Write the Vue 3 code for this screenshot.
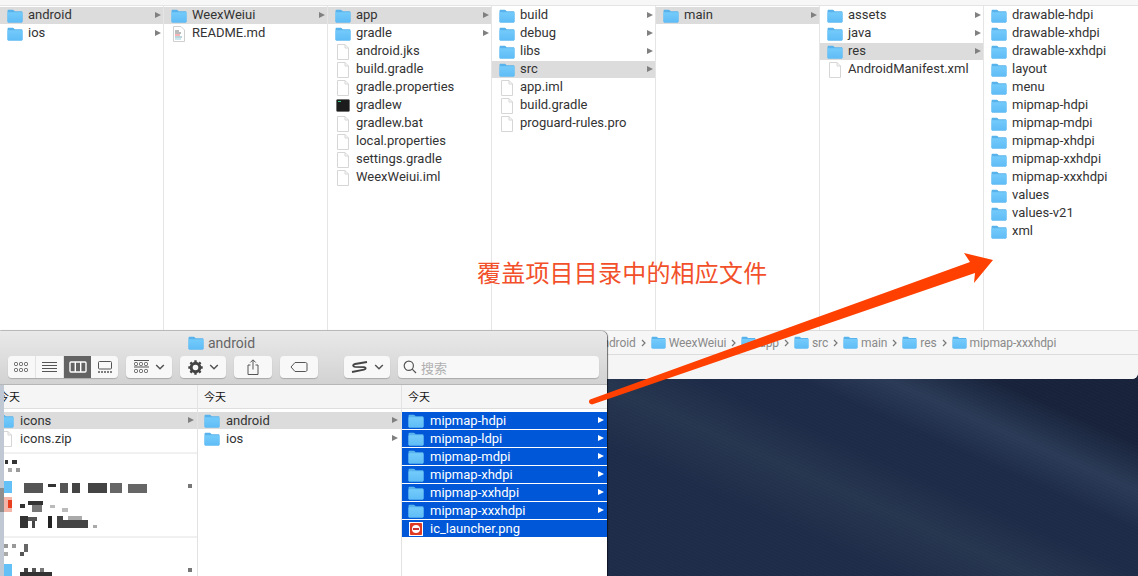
<script setup>
const F = 'folder', D = 'file'
const backCols = [
  [{ n: 'android', i: F, a: 1, s: 1 }, { n: 'ios', i: F, a: 1 }],
  [{ n: 'WeexWeiui', i: F, a: 1, s: 1 }, { n: 'README.md', i: 'doc' }],
  [{ n: 'app', i: F, a: 1, s: 1 }, { n: 'gradle', i: F, a: 1 }, { n: 'android.jks', i: D }, { n: 'build.gradle', i: D }, { n: 'gradle.properties', i: D }, { n: 'gradlew', i: 'term' }, { n: 'gradlew.bat', i: D }, { n: 'local.properties', i: D }, { n: 'settings.gradle', i: D }, { n: 'WeexWeiui.iml', i: D }],
  [{ n: 'build', i: F, a: 1 }, { n: 'debug', i: F, a: 1 }, { n: 'libs', i: F, a: 1 }, { n: 'src', i: F, a: 1, s: 1 }, { n: 'app.iml', i: D }, { n: 'build.gradle', i: D }, { n: 'proguard-rules.pro', i: D }],
  [{ n: 'main', i: F, a: 1, s: 1 }],
  [{ n: 'assets', i: F, a: 1 }, { n: 'java', i: F, a: 1 }, { n: 'res', i: F, a: 1, s: 1 }, { n: 'AndroidManifest.xml', i: D }],
  ['drawable-hdpi', 'drawable-xhdpi', 'drawable-xxhdpi', 'layout', 'menu', 'mipmap-hdpi', 'mipmap-mdpi', 'mipmap-xhdpi', 'mipmap-xxhdpi', 'mipmap-xxxhdpi', 'values', 'values-v21', 'xml'].map((n) => ({ n, i: F }))
]
const path = ['android', 'WeexWeiui', 'app', 'src', 'main', 'res', 'mipmap-xxxhdpi']
const frontCols = [
  { cls: 'fc1', rows: [{ n: 'icons', i: F, a: 1, s: 1 }, { n: 'icons.zip', i: D }] },
  { cls: 'fc2', rows: [{ n: 'android', i: F, a: 1, s: 1 }, { n: 'ios', i: F, a: 1 }] },
  { cls: 'fc3', rows: ['mipmap-hdpi', 'mipmap-ldpi', 'mipmap-mdpi', 'mipmap-xhdpi', 'mipmap-xxhdpi', 'mipmap-xxxhdpi'].map((n) => ({ n, i: F, a: 1, b: 1 })).concat({ n: 'ic_launcher.png', i: 'png', b: 1 }) }
]
// Pixelated (censored) text blocks, in page coordinates: x, y, w, h, colour
const mosaic = [
  [5, 460, 3, 4, '#333'], [12, 460, 5, 4, '#333'], [8, 468, 4, 4, '#aaa'], [16, 468, 4, 4, '#999'],
  [24, 483, 19, 10, '#555'], [48, 484, 8, 3, '#333'], [60, 483, 8, 10, '#555'], [72, 483, 8, 10, '#444'], [88, 483, 19, 10, '#444'], [110, 483, 12, 10, '#666'], [128, 484, 19, 9, '#666'], [188, 484, 4, 4, '#777'],
  [20, 504, 5, 4, '#333'], [28, 501, 15, 4, '#333'], [32, 505, 10, 7, '#777'], [50, 505, 5, 3, '#bbb'], [62, 508, 6, 4, '#bbb'],
  [20, 516, 8, 12, '#333'], [28, 517, 9, 4, '#555'], [32, 521, 3, 7, '#444'], [48, 516, 4, 12, '#222'], [57, 516, 6, 12, '#444'], [63, 520, 25, 8, '#444'], [68, 516, 14, 4, '#aaa'], [93, 525, 4, 3, '#aaa'],
  [4, 544, 4, 4, '#999'], [12, 544, 4, 4, '#999'], [24, 544, 4, 8, '#666'], [20, 552, 4, 4, '#555'], [4, 552, 4, 4, '#aaa'],
  [20, 572, 32, 4, '#333'], [24, 568, 4, 4, '#444'], [32, 568, 4, 4, '#555'], [40, 568, 4, 4, '#777'], [188, 568, 4, 4, '#777']
]
</script>

<template>
  <div class="desktop">
    <svg class="defs" aria-hidden="true">
      <defs>
        <linearGradient id="fg" x1="0" y1="0" x2="0" y2="1">
          <stop offset="0" stop-color="#74cbfb" />
          <stop offset="1" stop-color="#5fbcf6" />
        </linearGradient>
      </defs>
      <symbol id="folder" viewBox="0 0 16 14">
        <path d="M0.5 2.2C0.5 1.3 1 .8 1.9 .8H5.6C6.3 .8 6.6 1 7 1.5L7.6 2.2H14.2C15 2.2 15.5 2.7 15.5 3.5V12.2C15.5 13 15 13.5 14.2 13.5H1.8C1 13.5 .5 13 .5 12.2Z" fill="#58b3ec" />
        <path d="M0.5 4C0.5 3.5 .8 3.2 1.3 3.2H14.7C15.2 3.2 15.5 3.5 15.5 4V12.2C15.5 13 15 13.5 14.2 13.5H1.8C1 13.5 .5 13 .5 12.2Z" fill="url(#fg)" />
      </symbol>
      <symbol id="file" viewBox="0 0 14 16">
        <path d="M1.5 .5H9L12.5 4V15.5H1.5Z" fill="#fff" stroke="#d6d6d6" />
        <path d="M9 .5V4H12.5" fill="none" stroke="#d6d6d6" />
      </symbol>
      <symbol id="doc" viewBox="0 0 14 16">
        <path d="M1.5 .5H9L12.5 4V15.5H1.5Z" fill="#fff" stroke="#cfcfcf" />
        <path d="M3 5H7M3 7H9" stroke="#777" />
        <path d="M3 9H8" stroke="#e66" />
        <path d="M3 11H10" stroke="#7ab" />
        <path d="M3 13H9" stroke="#9cd" />
      </symbol>
      <symbol id="term" viewBox="0 0 14 14">
        <rect x=".5" y=".5" width="13" height="12" rx="1" fill="#1c1c1c" stroke="#555" stroke-width=".5" />
        <path d="M2 2.5H5" stroke="#3c8" />
      </symbol>
      <symbol id="png" viewBox="0 0 14 14">
        <rect width="14" height="14" fill="#fff" />
        <rect x="1" y="1" width="12" height="12" rx="1" fill="#e03a22" />
        <circle cx="7" cy="7" r="4" fill="#fff" />
        <rect x="4" y="6" width="6" height="2" fill="#c33" />
      </symbol>
    </svg>

    <section class="back">
      <div class="strip"></div>
      <div class="columns">
        <div v-for="(col, c) in backCols" :key="c" class="col">
          <div v-for="r in col" :key="r.n" class="row" :class="{ sel: r.s }">
            <svg class="ico" :class="r.i"><use :href="'#' + r.i" /></svg>
            <span class="name">{{ r.n }}</span>
            <i v-if="r.a" class="tri"></i>
          </div>
        </div>
      </div>
      <div class="path">
        <template v-for="(p, k) in path" :key="p">
          <svg class="pico"><use href="#folder" /></svg>
          <span class="pname">{{ p }}</span>
          <svg v-if="k < path.length - 1" class="chev" viewBox="0 0 5 8"><path d="M1 1L4 4L1 7" fill="none" stroke="#777" stroke-width="1.2" /></svg>
        </template>
      </div>
      <div class="status"></div>
    </section>

    <section class="front">
      <header class="chrome">
        <div class="title">
          <svg class="tico"><use href="#folder" /></svg>
          <span>android</span>
        </div>
        <div class="tools">
          <div class="seg">
            <button class="btn">
              <svg width="15" height="12" viewBox="0 0 15 12" fill="none" stroke="#555" stroke-width="1">
                <rect x=".5" y="1.5" width="3" height="3" rx="1" /><rect x="5.5" y="1.5" width="3" height="3" rx="1" /><rect x="10.5" y="1.5" width="3" height="3" rx="1" />
                <rect x=".5" y="7.5" width="3" height="3" rx="1" /><rect x="5.5" y="7.5" width="3" height="3" rx="1" /><rect x="10.5" y="7.5" width="3" height="3" rx="1" />
              </svg>
            </button>
            <button class="btn">
              <svg width="15" height="12" viewBox="0 0 15 12" stroke="#555" stroke-width="1"><path d="M0 1.500H15M0 4.500H15M0 7.500H15M0 10.500H15" /></svg>
            </button>
            <button class="btn on">
              <svg width="18" height="12" viewBox="0 0 18 12" fill="none" stroke="#fff" stroke-width="1.4"><rect x="1" y="1" width="16" height="10" rx="1" /><path d="M6.300 1V11M11.700 1V11" /></svg>
            </button>
            <button class="btn">
              <svg width="16" height="13" viewBox="0 0 16 13" fill="none" stroke="#555" stroke-width="1"><rect x="1.500" y=".5" width="13" height="7.500" rx="1" /><path d="M1 11H15" stroke-dasharray="2 1" stroke-width="1.600" /></svg>
            </button>
          </div>
          <button class="btn w46 solo">
            <svg width="15" height="14" viewBox="0 0 15 14" fill="none" stroke="#555" stroke-width="1">
              <path d="M0 .5H15" /><rect x=".5" y="2.500" width="3" height="3" rx="1" /><rect x="5.500" y="2.500" width="3" height="3" rx="1" /><rect x="10.500" y="2.500" width="3" height="3" rx="1" />
              <path d="M0 7H15" /><rect x=".5" y="9.500" width="3" height="3" rx="1" /><rect x="5.500" y="9.500" width="3" height="3" rx="1" /><rect x="10.500" y="9.500" width="3" height="3" rx="1" />
            </svg>
            <svg class="dn" width="10" height="6" viewBox="0 0 10 6"><path d="M1.200 1L5 4.800L8.800 1" fill="none" stroke="#555" stroke-width="1.500" /></svg>
          </button>
          <button class="btn w46 solo">
            <svg width="15" height="15" viewBox="0 0 15 15">
              <circle cx="7.500" cy="7.500" r="4.300" fill="none" stroke="#444" stroke-width="3" />
              <path d="M7.500 .3V3M7.500 12V14.700M.3 7.500H3M12 7.500H14.700M2.400 2.400L4.300 4.300M10.700 10.700L12.600 12.600M12.600 2.400L10.700 4.300M4.300 10.700L2.400 12.600" stroke="#444" stroke-width="2.400" />
            </svg>
            <svg class="dn" width="10" height="6" viewBox="0 0 10 6"><path d="M1.200 1L5 4.800L8.800 1" fill="none" stroke="#555" stroke-width="1.500" /></svg>
          </button>
          <button class="btn w38 solo">
            <svg width="12" height="16" viewBox="0 0 12 16" fill="none" stroke="#555" stroke-width="1"><path d="M3.500 6H1V15.500H11V6H8.500M6 10.500V1M3.300 3.500L6 .8L8.700 3.500" /></svg>
          </button>
          <button class="btn w38 solo">
            <svg width="18" height="10" viewBox="0 0 18 10" fill="none" stroke="#555" stroke-width="1"><path d="M5 .5H15.500C16.400 .5 17 1.100 17 2V8C17 8.900 16.400 9.500 15.500 9.500H5L1 5Z" /></svg>
          </button>
          <button class="btn w46 solo gapL">
            <svg width="17" height="12" viewBox="0 0 17 12" fill="none" stroke="#444" stroke-width="1.800"><path d="M16 1L4 3C1.500 3.600 1.500 5.600 4 5.800L13 6.200C15.500 6.600 15 8.300 13 8.700L1 11" /></svg>
            <svg class="dn" width="10" height="6" viewBox="0 0 10 6"><path d="M1.200 1L5 4.800L8.800 1" fill="none" stroke="#555" stroke-width="1.500" /></svg>
          </button>
          <div class="search">
            <svg width="14" height="14" viewBox="0 0 14 14" fill="none" stroke="#555" stroke-width="1.200"><circle cx="5.800" cy="5.800" r="4.600" /><path d="M9.200 9.200L13 13" /></svg>
            <span>搜索</span>
          </div>
        </div>
      </header>
      <div class="fbody">
        <div class="edge"></div>
        <div class="edge-dark"></div>
        <div v-for="(col, c) in frontCols" :key="c" class="fcol" :class="col.cls">
          <div class="fhead">今天</div>
          <div class="frows">
            <div v-for="r in col.rows" :key="r.n" class="row" :class="{ sel: r.s, blue: r.b }">
              <svg class="ico" :class="r.i"><use :href="'#' + r.i" /></svg>
              <span class="name">{{ r.n }}</span>
              <i v-if="r.a" class="tri"></i>
            </div>
            <svg v-if="c === 0" class="mosaic" width="205" height="130" viewBox="-8 447 205 130">
              <path d="M4 453H197M4 537H197" stroke="#e2e2e2" />
              <rect x="4" y="481" width="8" height="12" fill="#64c1f8" />
              <rect x="4" y="497" width="8" height="15" fill="#f3b5a8" />
              <rect x="8" y="500" width="4" height="8" fill="#e8401f" />
              <rect x="4" y="564" width="8" height="12" fill="#64c1f8" />
              <rect v-for="(m, k) in mosaic" :key="k" :x="m[0]" :y="m[1]" :width="m[2]" :height="m[3]" :fill="m[4]" />
            </svg>
          </div>
        </div>
      </div>
    </section>

    <div class="note">覆盖项目目录中的相应文件</div>
    <svg class="arrow" width="1138" height="576" viewBox="0 0 1138 576">
      <path d="M590 399.500L970 262L964 253L993 260L974 283L975 273L592 404.500C589 404 588 401 590 399.500Z" fill="#ff4000" />
    </svg>
  </div>
</template>

<style scoped>
.desktop {
  position: relative;
  width: 1138px;
  height: 576px;
  overflow: hidden;
  font-family: Roboto, "Noto Sans CJK SC", sans-serif;
  font-size: 13px;
  color: #333;
  background:
    repeating-linear-gradient(204deg, rgba(255, 255, 255, 0.012) 0 1px, rgba(255, 255, 255, 0) 1px 3px),
    linear-gradient(204deg, #18233b 0%, #18233b 41%, #2b3b57 45.4%, #1d2b48 49%, #1d2b48 53%, #27364f 57.5%, #1e2c49 63%, #1e2c49 100%);
}
.defs { position: absolute; width: 0; height: 0; }
.back {
  display: flex;
  flex-direction: column;
  height: 379px;
  background: #f5f5f5;
  border-bottom-right-radius: 6px;
  overflow: hidden;
}
.strip { height: 5px; background: #f7f7f7; border-bottom: 1px solid #e4e4e4; }
.columns { display: flex; height: 324px; background: #fff; }
.col { flex: none; width: 163px; border-right: 1px solid #e5e5e5; }
.col:last-child { flex: 1; border-right: 0; }
.row {
  position: relative;
  display: flex;
  align-items: center;
  height: 17px;
  margin-top: 1px;
  padding-left: 7px;
}
.row.sel { background: #dcdcdc; }
.row.blue { background: #0058d8; color: #fff; }
.ico { flex: none; width: 16px; height: 14px; margin-right: 5px; }
.ico.file, .ico.doc { width: 14px; height: 16px; margin: 0 6px 0 1px; }
.ico.term, .ico.png { width: 14px; height: 14px; margin: 0 6px 0 1px; }
.name { white-space: nowrap; line-height: 16px; padding-bottom: 1px; }
.tri {
  position: absolute;
  right: 2px;
  top: 5px;
  border-left: 6px solid #808080;
  border-top: 3.5px solid transparent;
  border-bottom: 3.5px solid transparent;
}
.row.blue .tri { border-left-color: #fff; }
.path {
  display: flex;
  align-items: center;
  height: 25px;
  padding-left: 578px;
  background: #f6f6f6;
  border-top: 1px solid #dcdcdc;
  border-bottom: 1px solid #dcdcdc;
  box-sizing: border-box;
  color: #8a8a8a;
  font-size: 12px;
  letter-spacing: -0.1px;
  white-space: nowrap;
}
.pico { width: 15px; height: 13px; margin-right: 3px; flex: none; }
.chev { width: 5px; height: 8px; margin: 0 5px 0 5px; flex: none; }
.status { flex: 1; background: #f5f5f5; }
.front {
  position: absolute;
  left: 0;
  top: 331px;
  width: 607px;
  height: 245px;
  display: flex;
  flex-direction: column;
  background: #fff;
  border-top-right-radius: 6px;
  box-shadow: 1px 0 1px rgba(0, 0, 0, 0.55), 0 -1px 1px rgba(0, 0, 0, 0.12);
  overflow: hidden;
}
.chrome {
  height: 54px;
  flex: none;
  box-sizing: border-box;
  background: linear-gradient(#e9e9e9, #d2d2d2);
  border-bottom: 1px solid #b6b6b6;
}
.title {
  display: flex;
  align-items: center;
  height: 23px;
  padding-left: 188px;
  font-size: 14px;
  color: #666;
}
.tico { width: 16px; height: 14px; margin-right: 4px; }
.tools { display: flex; align-items: center; gap: 8px; padding: 2px 0 0 8px; }
.seg { display: flex; width: 110px; border-radius: 4px; overflow: hidden; box-shadow: 0 1px 1px rgba(0, 0, 0, 0.2); }
.btn {
  display: flex;
  align-items: center;
  justify-content: center;
  height: 22px;
  padding: 0;
  border: 0;
  background: #f8f8f8;
}
.seg .btn { flex: 1; box-sizing: border-box; border-right: 1px solid #e2e2e2; }
.seg .btn:last-child { border-right: 0; }
.seg .btn.on { background: #636363; border-right: 0; }
.solo { border-radius: 4px; box-shadow: 0 1px 1px rgba(0, 0, 0, 0.2); }
.w46 { width: 46px; }
.w38 { width: 38px; }
.gapL { margin-left: 18px; }
.dn { margin-left: 6px; }
.search {
  display: flex;
  align-items: center;
  gap: 4px;
  width: 201px;
  height: 22px;
  padding-left: 5px;
  box-sizing: border-box;
  background: #f8f8f8;
  border-radius: 4px;
  box-shadow: 0 1px 1px rgba(0, 0, 0, 0.2);
  color: #b0b0b0;
  font-size: 13px;
}
.fbody { position: relative; display: flex; flex: 1; margin-left: -8px; overflow: hidden; }
.edge { position: absolute; left: 8px; top: 0; bottom: 0; width: 4px; background: #c0c8d4; z-index: 2; }
.edge-dark { position: absolute; left: 8px; top: 103px; height: 24px; width: 4px; background: #8e8e8e; z-index: 2; }
.fcol { flex: none; border-right: 1px solid #e2e2e2; box-sizing: border-box; }
.fc1 { width: 206px; }
.fc2 { width: 204px; }
.fc3 { width: 205px; border-right: 0; }
.fhead {
  height: 23px;
  line-height: 23px;
  padding-left: 6px;
  background: #f5f5f5;
  border-bottom: 1px solid #dedede;
  font-family: "Noto Sans CJK SC", sans-serif;
  font-size: 11px;
  color: #111;
}
.frows { padding-top: 2px; }
.frows .row { padding-left: 6px; }
.frows .name { line-height: 17px; padding-bottom: 0; }
.frows .ico.folder { margin-right: 6px; }
.frows .ico.file, .frows .ico.png { margin: 0 7px 0 1px; }
.frows .tri { right: 3px; }
.mosaic { display: block; filter: blur(0.6px); }
.note {
  position: absolute;
  left: 477px;
  top: 255px;
  font-family: "Noto Sans CJK SC", sans-serif;
  font-size: 24px;
  line-height: 34px;
  letter-spacing: 0.2px;
  color: #f2502a;
  white-space: nowrap;
}
.arrow { position: absolute; left: 0; top: 0; pointer-events: none; }
</style>
